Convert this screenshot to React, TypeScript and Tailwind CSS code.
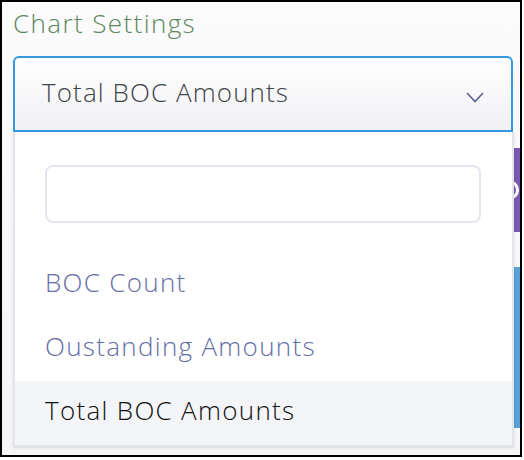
import React from "react";

export default function App() {
  const font = { fontFamily: '"Open Sans", "Noto Sans", sans-serif' };
  return (
    <div className="w-[524px] h-[460px] bg-white" style={font}>
      <div className="w-[522px] h-[457px] border-2 border-black bg-gradient-to-b from-[#fbfbfc] to-[#f6f6f8] overflow-hidden">
        <div className="pl-[11px] pr-[7px]">
          <div className="pt-[5px] text-[26px] font-[350] leading-[32px] tracking-[1.4px] text-[#5b8660]">
            Chart Settings
          </div>
          <div className="relative mt-[17px] z-10">
            <div className="flex h-[76px] items-start justify-between rounded-t-[6px] border-2 border-[#3399e0] bg-gradient-to-b from-white to-[#f1f1f5] pl-[27px] pr-[27px] pt-[18px]">
              <span className="text-[26px] font-[350] leading-[32px] tracking-[1.1px] text-[#3e4347]">
                Total BOC Amounts
              </span>
              <svg
                width="18"
                height="11"
                viewBox="0 0 18 11"
                className="mt-[16px]"
                fill="none"
                stroke="#5b6194"
                strokeWidth="1.6"
              >
                <polyline points="1,1 9,9.5 17,1" />
              </svg>
            </div>
            <div className="absolute left-0 right-[-1px] top-full border-x-2 border-b-2 border-[#e3e5eb] bg-white pt-[33px] shadow-sm">
              <div className="mx-[30px] mr-[31px] h-[58px] rounded-[8px] border-2 border-[#e3e6ed] bg-white" />
              <div className="mt-[30px]">
                <div className="h-[64px] pl-[30px] pt-[13px] text-[26px] font-[350] leading-[32px] tracking-[1.3px] text-[#666ea6]">
                  BOC Count
                </div>
                <div className="h-[64px] pl-[30px] pt-[13px] text-[26px] font-[350] leading-[32px] tracking-[1.3px] text-[#666ea6]">
                  Oustanding Amounts
                </div>
                <div className="h-[64px] bg-[#f4f5f8] pl-[30px] pt-[13px] text-[26px] font-[350] leading-[32px] tracking-[1.3px] text-[#111111]">
                  Total BOC Amounts
                </div>
              </div>
            </div>
          </div>
        </div>
        <div className="mt-[16px] flex flex-col items-end">
          <div className="flex h-[84px] w-[220px] items-center justify-end bg-[#7b58b0] pr-[1px]">
            <div className="h-[20px] w-[20px] rounded-full border-[3px] border-white" />
          </div>
          <div className="mt-[35px] h-[161px] w-[220px] bg-[#5aa2dc]" />
        </div>
      </div>
    </div>
  );
}
